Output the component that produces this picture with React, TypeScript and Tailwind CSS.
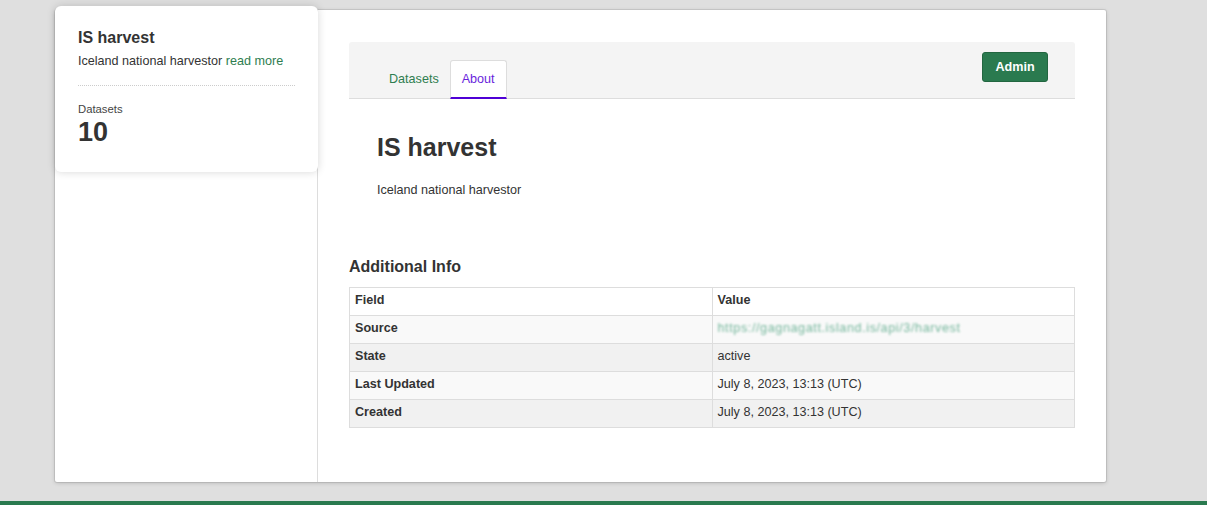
import React from "react";

export default function App() {
  const rows: [string, React.ReactNode][] = [
    [
      "Source",
      <span className="inline-block text-[#3c9a74] opacity-70 blur-[1.3px] tracking-[0.6px] select-none">
        https://gagnagatt.island.is/api/3/harvest
      </span>,
    ],
    ["State", "active"],
    ["Last Updated", "July 8, 2023, 13:13 (UTC)"],
    ["Created", "July 8, 2023, 13:13 (UTC)"],
  ];
  const cell = "border border-[#ddd] px-[5px] pt-[3px] pb-[5px] leading-[19px]";
  return (
    <div className="min-h-[505px] overflow-hidden bg-[#dfdfdf] font-['Liberation_Sans',Arial,sans-serif] text-[12.6px] text-[#333]">
      <div className="pt-[10px] pl-[55px]">
        <div className="flex h-[472px] w-[1051px] rounded-[2px] bg-white shadow-[0_0_0_1px_rgba(0,0,0,0.08),0_1px_4px_rgba(0,0,0,0.18)]">
          <aside className="w-[263px] shrink-0 border-r border-[#ddd]">
            <section className="relative z-10 -mt-[4px] w-[263px] rounded-[6px] bg-white px-[23px] pt-[22px] pb-[26px] shadow-[0_0_8px_rgba(0,0,0,0.16)]">
              <h1 className="text-[16px] font-bold leading-[19px]">IS harvest</h1>
              <p className="mt-[5px] leading-[18px]">
                Iceland national harvestor{" "}
                <a className="text-[#2e7d4f]">read more</a>
              </p>
              <div className="mt-[15px] border-t border-dotted border-[#ccc]" />
              <div className="mt-[15px] text-[11.3px] leading-[16px] text-[#444]">Datasets</div>
              <div className="mt-[2px] text-[27px] font-bold leading-[27px]">10</div>
            </section>
          </aside>
          <main className="flex-1 px-[31px] pt-[32px]">
            <div className="flex h-[57px] items-start justify-between rounded-t-[3px] border-b border-[#ddd] bg-[#f4f4f4]">
              <div className="flex self-end pl-[28px]">
                <div className="-mb-px flex h-[39px] items-center pl-[12px] pr-[11px] text-[#2e7d4f]">Datasets</div>
                <div className="-mb-px flex h-[39px] items-center rounded-t-[3px] border border-b-2 border-[#ddd] border-b-[#4f00d6] bg-white px-[11px] text-[#6a1fdc]">
                  About
                </div>
              </div>
              <button className="mt-[10px] mr-[27px] h-[30px] w-[66px] rounded-[3px] border border-[#226640] bg-[#2a7a4f] text-[12.6px] font-bold text-white">
                Admin
              </button>
            </div>
            <div className="px-[28px] pt-[33px]">
              <h1 className="text-[25px] font-bold leading-[30px]">IS harvest</h1>
              <p className="mt-[19px] leading-[18px]">Iceland national harvestor</p>
            </div>
            <h3 className="mt-[58px] text-[16px] font-bold leading-[19px]">Additional Info</h3>
            <table className="mt-[11px] w-full border-collapse border border-[#ddd]">
              <thead>
                <tr className="bg-white">
                  <th className={`w-1/2 text-left font-bold ${cell}`}>Field</th>
                  <th className={`text-left font-bold ${cell}`}>Value</th>
                </tr>
              </thead>
              <tbody>
                {rows.map(([k, v], i) => (
                  <tr key={k} className={i % 2 === 0 ? "bg-[#f9f9f9]" : "bg-[#f1f1f1]"}>
                    <th className={`text-left font-bold ${cell}`}>{k}</th>
                    <td className={cell}>{v}</td>
                  </tr>
                ))}
              </tbody>
            </table>
          </main>
        </div>
      </div>
      <div className="mt-[19px] h-[10px] bg-[#2a7a4f]" />
    </div>
  );
}
